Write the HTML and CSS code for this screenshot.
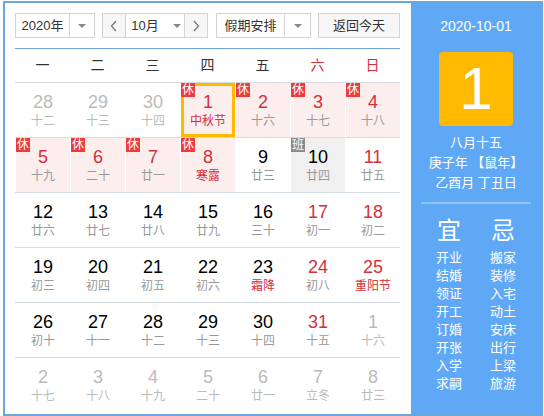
FILE: index.html
```html
<!DOCTYPE html>
<html lang="zh-CN">
<head>
    <meta charset="UTF-8">
    <title>万年历</title>
    <link rel="stylesheet" href="styles.css">
</head>
<body>

<div class="calendar">
    <div class="main">
        <div class="toolbar">
            <div class="select year">
                <span class="label">2020年</span>
                <span class="arrow"><b></b></span>
            </div>
            <div class="select month">
                <span class="step"><svg width="8" height="12" viewBox="0 0 8 12"><polyline points="6,1 1.5,6 6,11" fill="none" stroke="#777" stroke-width="1.3"/></svg></span>
                <span class="label">10月<b></b></span>
                <span class="step"><svg width="8" height="12" viewBox="0 0 8 12"><polyline points="2,1 6.5,6 2,11" fill="none" stroke="#777" stroke-width="1.3"/></svg></span>
            </div>
            <div class="select holiday">
                <span class="label">假期安排</span>
                <span class="arrow"><b></b></span>
            </div>
            <div class="today-btn">返回今天</div>
        </div>

        <div class="rule"></div>

        <div class="weekdays">
            <span>一</span><span>二</span><span>三</span><span>四</span><span>五</span>
            <span class="we">六</span><span class="we">日</span>
        </div>

        <div class="week">
            <div class="day other"><span class="num">28</span><span class="lunar">十二</span></div>
            <div class="day other"><span class="num">29</span><span class="lunar">十三</span></div>
            <div class="day other"><span class="num">30</span><span class="lunar">十四</span></div>
            <div class="day rest today"><i class="tag">休</i><span class="num">1</span><span class="lunar fest">中秋节</span></div>
            <div class="day rest"><i class="tag">休</i><span class="num">2</span><span class="lunar">十六</span></div>
            <div class="day rest"><i class="tag">休</i><span class="num">3</span><span class="lunar">十七</span></div>
            <div class="day rest"><i class="tag">休</i><span class="num">4</span><span class="lunar">十八</span></div>
        </div>
        <div class="week">
            <div class="day rest"><i class="tag">休</i><span class="num">5</span><span class="lunar">十九</span></div>
            <div class="day rest"><i class="tag">休</i><span class="num">6</span><span class="lunar">二十</span></div>
            <div class="day rest"><i class="tag">休</i><span class="num">7</span><span class="lunar">廿一</span></div>
            <div class="day rest"><i class="tag">休</i><span class="num">8</span><span class="lunar fest">寒露</span></div>
            <div class="day"><span class="num">9</span><span class="lunar">廿三</span></div>
            <div class="day work"><i class="tag">班</i><span class="num">10</span><span class="lunar">廿四</span></div>
            <div class="day we"><span class="num">11</span><span class="lunar">廿五</span></div>
        </div>
        <div class="week">
            <div class="day"><span class="num">12</span><span class="lunar">廿六</span></div>
            <div class="day"><span class="num">13</span><span class="lunar">廿七</span></div>
            <div class="day"><span class="num">14</span><span class="lunar">廿八</span></div>
            <div class="day"><span class="num">15</span><span class="lunar">廿九</span></div>
            <div class="day"><span class="num">16</span><span class="lunar">三十</span></div>
            <div class="day we"><span class="num">17</span><span class="lunar">初一</span></div>
            <div class="day we"><span class="num">18</span><span class="lunar">初二</span></div>
        </div>
        <div class="week">
            <div class="day"><span class="num">19</span><span class="lunar">初三</span></div>
            <div class="day"><span class="num">20</span><span class="lunar">初四</span></div>
            <div class="day"><span class="num">21</span><span class="lunar">初五</span></div>
            <div class="day"><span class="num">22</span><span class="lunar">初六</span></div>
            <div class="day"><span class="num">23</span><span class="lunar fest">霜降</span></div>
            <div class="day we"><span class="num">24</span><span class="lunar">初八</span></div>
            <div class="day we"><span class="num">25</span><span class="lunar fest">重阳节</span></div>
        </div>
        <div class="week">
            <div class="day"><span class="num">26</span><span class="lunar">初十</span></div>
            <div class="day"><span class="num">27</span><span class="lunar">十一</span></div>
            <div class="day"><span class="num">28</span><span class="lunar">十二</span></div>
            <div class="day"><span class="num">29</span><span class="lunar">十三</span></div>
            <div class="day"><span class="num">30</span><span class="lunar">十四</span></div>
            <div class="day we"><span class="num">31</span><span class="lunar">十五</span></div>
            <div class="day other"><span class="num">1</span><span class="lunar">十六</span></div>
        </div>
        <div class="week">
            <div class="day other"><span class="num">2</span><span class="lunar">十七</span></div>
            <div class="day other"><span class="num">3</span><span class="lunar">十八</span></div>
            <div class="day other"><span class="num">4</span><span class="lunar">十九</span></div>
            <div class="day other"><span class="num">5</span><span class="lunar">二十</span></div>
            <div class="day other"><span class="num">6</span><span class="lunar">廿一</span></div>
            <div class="day other"><span class="num">7</span><span class="lunar">立冬</span></div>
            <div class="day other"><span class="num">8</span><span class="lunar">廿三</span></div>
        </div>
    </div>

    <div class="side">
        <div class="side-date">2020-10-01</div>
        <div class="side-day">1</div>
        <div class="side-info">
            <p>八月十五</p>
            <p>庚子年 【鼠年】</p>
            <p>乙酉月 丁丑日</p>
        </div>
        <div class="side-line"></div>
        <div class="almanac">
            <ul>
                <li class="head">宜</li>
                <li>开业</li><li>结婚</li><li>领证</li><li>开工</li>
                <li>订婚</li><li>开张</li><li>入学</li><li>求嗣</li>
            </ul>
            <ul>
                <li class="head">忌</li>
                <li>搬家</li><li>装修</li><li>入宅</li><li>动土</li>
                <li>安床</li><li>出行</li><li>上梁</li><li>旅游</li>
            </ul>
        </div>
    </div>
</div>

</body>
</html>
```

FILE: styles.css
```css
body {
    margin: 0;
    font-family: "Liberation Sans", "Noto Sans CJK SC", sans-serif;
    background-color: #fff;
}

.calendar {
    display: flex;
    width: 536px;
    height: 411px;
    margin: 1px 0 0 3px;
    border: 2px solid #6ca6dc;
}

/* left: month grid */
.main {
    width: 385px;
    padding: 10px 11px 0 10px;
}

.toolbar {
    display: flex;
    height: 25px;
    font-size: 13px;
    color: #333;
}

.select {
    display: flex;
    box-sizing: border-box;
    height: 25px;
    border: 1px solid #d3d3d3;
    background-color: #fff;
}

.select .label {
    flex: 1;
    text-align: center;
    line-height: 23px;
}

.select .arrow {
    width: 24px;
    border-left: 1px solid #d3d3d3;
    display: flex;
    justify-content: center;
    align-items: center;
}

.select b {
    display: inline-block;
    width: 0;
    height: 0;
    border-top: 4px solid #888;
    border-left: 4px solid transparent;
    border-right: 4px solid transparent;
}

.year {
    width: 80px;
}

.month {
    width: 106px;
    margin-left: 7px;
}

.month .step {
    width: 22px;
    background-color: #f6f6f6;
    display: flex;
    justify-content: center;
    align-items: center;
}

.month .step:first-child {
    border-right: 1px solid #d3d3d3;
}

.month .step:last-child {
    border-left: 1px solid #d3d3d3;
}

.month .label {
    display: flex;
    align-items: center;
    justify-content: center;
    gap: 14px;
    padding-left: 2px;
}

.holiday {
    width: 95px;
    margin-left: 8px;
}

.holiday .arrow {
    width: 25px;
}

.today-btn {
    box-sizing: border-box;
    width: 82px;
    height: 25px;
    margin-left: 7px;
    border: 1px solid #d3d3d3;
    background-color: #f6f6f6;
    text-align: center;
    line-height: 23px;
}

.rule {
    height: 1px;
    margin-top: 10px;
    background-color: #6ca6dc;
}

.weekdays {
    display: grid;
    grid-template-columns: repeat(7, 55px);
    height: 33px;
    line-height: 33px;
    text-align: center;
    font-size: 14px;
    color: #333;
    border-bottom: 1px solid #d5dbe2;
}

.weekdays .we {
    color: #d3303b;
}

.week {
    display: grid;
    grid-template-columns: repeat(7, 55px);
    height: 54px;
    border-bottom: 1px solid #d5dbe2;
}

.week:last-child {
    border-bottom: none;
}

.day {
    position: relative;
    box-sizing: border-box;
    margin-left: 1px;
    padding-top: 9px;
    display: flex;
    flex-direction: column;
    align-items: center;
}

.day .num {
    font-size: 18px;
    line-height: 20px;
    color: #000;
}

.day .lunar {
    font-size: 12px;
    line-height: 18px;
    color: #999;
}

.day .lunar.fest {
    color: #d3303b;
}

.day.we .num,
.day.rest .num {
    color: #d3303b;
}

.day.other .num,
.day.other .lunar {
    color: #bbb;
}

.day.rest {
    background-color: #fdeeee;
}

.day.work {
    background-color: #f0f0f0;
}

.day.today {
    border: 3px solid #ffba00;
    padding-top: 6px;
}

.tag {
    position: absolute;
    left: 0;
    top: 0;
    width: 14px;
    height: 14px;
    font-size: 12px;
    line-height: 14px;
    font-style: normal;
    text-align: center;
    color: #fff;
    background-color: #ec3c3c;
}

.day.today .tag {
    left: -3px;
    top: -3px;
}

.day.work .tag {
    background-color: #8c8c8c;
}

/* right: selected day */
.side {
    width: 130px;
    background-color: #5fa8f6;
    color: #fff;
    display: flex;
    flex-direction: column;
    align-items: center;
}

.side-date {
    margin-top: 13px;
    font-size: 14px;
    line-height: 20px;
}

.side-day {
    width: 74px;
    height: 74px;
    margin-top: 16px;
    border-radius: 4px;
    background-color: #ffb900;
    font-size: 60px;
    line-height: 74px;
    text-align: center;
}

.side-info {
    margin-top: 7px;
    text-align: center;
    font-size: 13px;
}

.side-info p {
    margin: 0;
    line-height: 20px;
}

.side-line {
    width: 110px;
    height: 2px;
    margin-top: 9px;
    background-color: #8fc2f9;
}

.almanac {
    display: flex;
    margin-top: 12px;
}

.almanac ul {
    list-style: none;
    margin: 0;
    padding: 0;
    width: 54px;
    text-align: center;
}

.almanac li {
    font-size: 13px;
    line-height: 18px;
}

.almanac li.head {
    font-size: 24px;
    line-height: 30px;
    margin-bottom: 3px;
}
```
